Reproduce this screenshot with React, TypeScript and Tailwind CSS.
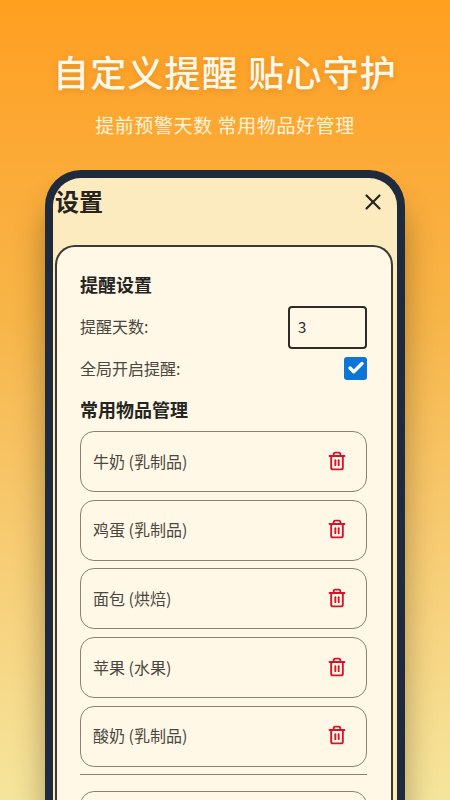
import { Check, Trash2, X } from "lucide-react";

const items = ["牛奶 (乳制品)", "鸡蛋 (乳制品)", "面包 (烘焙)", "苹果 (水果)", "酸奶 (乳制品)"];

const font = "font-['Noto_Sans_CJK_SC','Noto_Sans',sans-serif]";

function ItemRow({ label }: { label: string }) {
  return (
    <div className="flex h-[61px] items-center justify-between rounded-[14px] border-[1.5px] border-[#8a8272] pb-[2px] pl-[12px] pr-[19px]">
      <span className="text-[16px] text-[#4a473f]">{label}</span>
      <Trash2 size={20} strokeWidth={2.25} className="text-[#d4142a]" />
    </div>
  );
}

export default function App() {
  return (
    <div className={`${font} flex h-[800px] w-[450px] flex-col items-center overflow-hidden bg-gradient-to-b from-[#ff9f1f] via-[#f7b548] via-40% to-[#f5e59c]`}>
      <h1 className="mt-[46px] text-[36px] font-medium leading-[50px] tracking-[1.2px] text-[#fff8ea] [text-shadow:0_2px_6px_rgba(150,80,0,0.25)]">
        自定义提醒 贴心守护
      </h1>
      <p className="mt-[15px] text-[19px] leading-[28px] tracking-[0.6px] text-[#fff3dc]">提前预警天数 常用物品好管理</p>

      <div className="mt-[31px] flex h-[720px] w-[360px] shrink-0 flex-col rounded-t-[36px] border-[8px] border-b-0 border-[#1f2a3c] bg-[#fdebc0] shadow-[0_30px_30px_rgba(60,40,10,0.4)]">
        <div className="flex h-[67px] items-start justify-between pl-[2px] pr-[11px] pt-[5px]">
          <h2 className="text-[24px] font-bold leading-[36px] text-[#26241f]">设置</h2>
          <X size={26} strokeWidth={2} className="mt-[6px] text-[#26241f]" />
        </div>

        <div className="ml-[2px] mr-[4px] flex-1 rounded-t-[20px] border-2 border-b-0 border-[#3c3a33] bg-[#fff8e7] pl-[23px] pr-[24px] pt-[24px]">
          <h3 className="text-[18px] font-bold leading-[26px] text-[#26241f]">提醒设置</h3>
          <div className="mt-[9px] flex h-[43px] items-center justify-between">
            <span className="pb-[4px] text-[16px] text-[#4a473f]">提醒天数:</span>
            <div className="flex h-[43px] w-[79px] items-center rounded-[4px] border-2 border-[#2d2b26] pl-[8px] text-[15px] text-[#2d2b26]">
              3
            </div>
          </div>
          <div className="mt-[7px] flex h-[24px] items-center justify-between">
            <span className="text-[16px] text-[#4a473f]">全局开启提醒:</span>
            <div className="flex h-[23px] w-[23px] items-center justify-center rounded-[3px] bg-[#0b76d8]">
              <Check size={18} strokeWidth={4.5} className="text-white" />
            </div>
          </div>
          <h3 className="mt-[16px] text-[18px] font-bold leading-[26px] text-[#26241f]">常用物品管理</h3>
          <div className="mt-[9px] flex flex-col gap-[7.7px]">
            {items.map((item) => (
              <ItemRow key={item} label={item} />
            ))}
          </div>
          <div className="mt-[7px] border-t-[1.5px] border-[#8a8272]" />
          <div className="mt-[16px] h-[61px] rounded-[14px] border-[1.5px] border-[#8a8272]" />
        </div>
      </div>
    </div>
  );
}
